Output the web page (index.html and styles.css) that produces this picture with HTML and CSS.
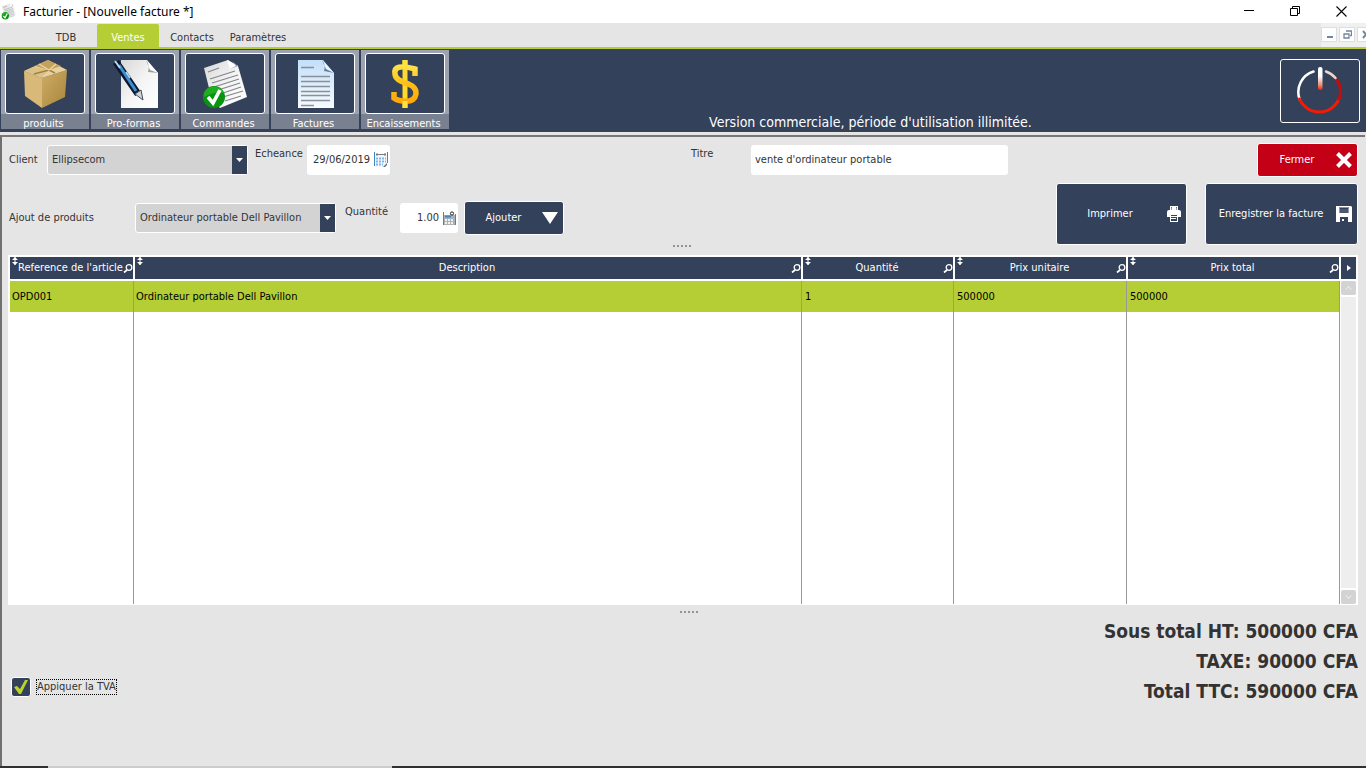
FILE: index.html
```html
<!DOCTYPE html>
<html lang="fr">
<head>
<meta charset="utf-8">
<title>Facturier - [Nouvelle facture *]</title>
<link rel="stylesheet" href="styles.css">
</head>
<body>
<svg class="defs" aria-hidden="true">
  <defs>
    <linearGradient id="paper" x1="0" y1="0" x2="1" y2="1"><stop offset="0" stop-color="#d8d8d8"/><stop offset=".5" stop-color="#f4f4f4"/><stop offset="1" stop-color="#ffffff"/></linearGradient>
    <linearGradient id="bluePaper" x1="0" y1="0" x2="0" y2="1"><stop offset="0" stop-color="#c3dffa"/><stop offset="1" stop-color="#f6fcff"/></linearGradient>
    <linearGradient id="gold" x1="0" y1="0" x2="0" y2="1"><stop offset="0" stop-color="#ffe04a"/><stop offset=".5" stop-color="#ffbe14"/><stop offset="1" stop-color="#ffa90a"/></linearGradient>
    <linearGradient id="boxSide" x1="0" y1="0" x2="1" y2="1"><stop offset="0" stop-color="#cfab66"/><stop offset="1" stop-color="#a8863a"/></linearGradient>
    <linearGradient id="stem" x1="0" y1="0" x2="0" y2="1"><stop offset=".4" stop-color="#ffffff"/><stop offset=".8" stop-color="#e08a70"/><stop offset="1" stop-color="#ff1a00"/></linearGradient>
    <symbol id="order" viewBox="0 0 48 50">
      <path d="M3 9 27 1l10 6 9 31-27 11L11 41Z" fill="url(#paper)"/>
      <path d="m26 1 3 9 8-3Z" fill="#fff"/><path d="m29 10 8-3-6-5 4 5Z" fill="#8f929a"/>
      <path d="m7 13 11-4M9 20l25-8M11 24l26-8M13 28l25-8M14 32l25-8M19 35l21-7M22 38l20-6M24 42l16-5" stroke="#85878c" stroke-width="1.3"/>
      <circle cx="13" cy="38" r="11" fill="#079510"/><path d="M3 34a11 11 0 0 1 20 0q-9-2-20 4Z" fill="#20ad20"/>
      <path d="m7 38 5 6 7-13" fill="none" stroke="#fff" stroke-width="3.6"/>
    </symbol>
    <symbol id="sort" viewBox="0 0 6 8"><path d="M3 0v8" stroke="#fff"/><path d="M0 3h6L3 0ZM0 5h6L3 8Z" fill="#fff"/></symbol>
    <symbol id="search" viewBox="0 0 10 9"><circle cx="6" cy="3.5" r="2.8" fill="none" stroke="#fff" stroke-width="1.3"/><path d="M4 6 1 8.5" stroke="#fff" stroke-width="1.8"/></symbol>
  </defs>
</svg>

<header class="titlebar">
  <svg class="app-icon"><use href="#order"/></svg>
  <h1 class="title">Facturier - [Nouvelle facture *]</h1>
  <div class="window-controls">
    <button class="window-btn" aria-label="Réduire"><svg width="11" height="11" viewBox="0 0 11 11"><path d="M0 4.5h10" stroke="#000"/></svg></button>
    <button class="window-btn" aria-label="Restaurer"><svg width="11" height="11" viewBox="0 0 11 11"><path d="M.5 2.5h7v7h-7ZM2.500 2V.5h7v7H8" fill="none" stroke="#000"/></svg></button>
    <button class="window-btn" aria-label="Quitter"><svg width="11" height="11" viewBox="0 0 11 11"><path d="m.5.500 10 10M10.500.500l-10 10" stroke="#000" stroke-width="1.1"/></svg></button>
  </div>
</header>

<nav class="menubar">
  <a class="tab tab-first" href="#tdb">TDB</a>
  <a class="tab active" href="#ventes" aria-current="page">Ventes</a>
  <a class="tab" href="#contacts">Contacts</a>
  <a class="tab tab-last" href="#parametres">Paramètres</a>
  <div class="child-controls">
    <button class="child-btn" aria-label="Réduire la fenêtre"><svg width="9" height="9" viewBox="0 0 9 9"><path d="M2 7h6" stroke="#7485a0" stroke-width="2"/></svg></button>
    <button class="child-btn" aria-label="Restaurer la fenêtre"><svg width="9" height="9" viewBox="0 0 9 9"><path d="M3 1h5.500v4.500H7M1 4h5v4H1Z" fill="none" stroke="#7485a0" stroke-width="1.300"/></svg></button>
    <button class="child-btn child-close" aria-label="Fermer la fenêtre"><svg width="9" height="9" viewBox="0 0 9 9"><path d="m1 1 6 7M7 1 1 8" stroke="#7485a0" stroke-width="2"/></svg></button>
  </div>
</nav>

<div class="ribbon">
  <div class="tiles">
    <button class="tile"><span class="tile-picture">
      <svg width="48" height="50" viewBox="0 0 48 50"><path d="m3 12 18 7v30L4 37Z" fill="#d9b978"/><path d="m21 19 25-8-2 27-23 11Z" fill="url(#boxSide)"/><path d="M3 12 27 1l19 10-25 8Z" fill="#e8d19c"/><path d="m12 8 16 3-7 7-17-6Z" fill="#dcc084"/><path d="m14 7 14 4 12-4-13-6Z" fill="#c4a25c"/><path d="m13 15 15-4 6 3" fill="none" stroke="#a18145" stroke-width="1.500"/><path d="m18 5 10 6 7-6" fill="none" stroke="#ecd9a8" stroke-width="1.200"/></svg>
    </span><span class="tile-label">produits</span></button>
    <button class="tile"><span class="tile-picture">
      <svg width="48" height="50" viewBox="0 0 48 50"><path d="M10 1h26l11 13v35H10Z" fill="url(#paper)"/><path d="M35 1q4 5 2 12l10 1Z" fill="#fff"/><path d="M35 1q4 5 2 12l10 1L39 11Z" fill="#9a9ca3"/><path d="m5 3 22 32" stroke="#0c1830" stroke-width="7"/><path d="m8 6 17 26" stroke="#3f8fd0" stroke-width="3"/><path d="m4 2 5 7" stroke="#b9d8ee" stroke-width="2"/><path d="m24 35 6-4 2 10Z" fill="#cfd2d8" stroke="#444c5c"/><path d="m15 13 4 6" stroke="#aee0ff" stroke-width="1.500"/></svg>
    </span><span class="tile-label">Pro-formas</span></button>
    <button class="tile"><span class="tile-picture"><svg width="48" height="50"><use href="#order"/></svg></span><span class="tile-label">Commandes</span></button>
    <button class="tile"><span class="tile-picture">
      <svg width="48" height="50" viewBox="0 0 48 50"><path d="M7 1h25l11 13v35H7Z" fill="url(#bluePaper)"/><path d="M31 1q4 5 2 11l10 2Z" fill="#e7f5ff"/><path d="M31 1q4 5 2 11l10 2-8-4Z" fill="#65809e"/><path d="M10 8.500h13M10 17.500h29M10 22.500h29M10 27.500h29M10 32.500h29M10 36.500h29M10 41.500h29M10 46.500h13" stroke="#8b9097" stroke-width="1.300"/></svg>
    </span><span class="tile-label">Factures</span></button>
    <button class="tile"><span class="tile-picture">
      <svg width="48" height="50" viewBox="0 0 48 50"><path d="M24 1v48" stroke="#ffd92e" stroke-width="5"/><path d="M34 17V10Q12 4 14 15c1 11 22 7 21 20-2 11-18 7-22 4v-6" fill="none" stroke="url(#gold)" stroke-width="5.500"/><path d="M24 1v7M24 42v7" stroke="#ffe23d" stroke-width="5"/></svg>
    </span><span class="tile-label">Encaissements</span></button>
  </div>
  <p class="license">Version commerciale, période d'utilisation illimitée.</p>
  <button class="power" aria-label="Arrêter"><svg width="46" height="50" viewBox="0 0 46 50" fill="none" stroke-linecap="round"><path d="M16.500 5.500A21.500 21.500 0 0 0 2.500 33" stroke="#fff" stroke-width="2.500"/><path d="M2.500 33A21.500 21.500 0 0 0 42 33" stroke="#f21b06" stroke-width="3"/><path d="M42 33A21.500 21.500 0 0 0 38.500 12" stroke="#c60b0b" stroke-width="3"/><path d="M38.500 12A21.500 21.500 0 0 0 29 5.500" stroke="#ead8c8" stroke-width="2.500"/><rect x="21" y="1" width="4.500" height="23" rx="2" fill="url(#stem)"/></svg></button>
</div>

<main class="sheet">
  <form class="form">
    <div class="fields">
      <div class="field-row">
        <div class="group group-client">
          <label for="client">Client</label>
          <span class="combo"><select id="client"><option>Ellipsecom</option></select><svg class="combo-arrow" viewBox="0 0 15 28"><path d="M4 12h7l-3.500 4Z" fill="#fff"/></svg></span>
        </div>
        <div class="group group-due">
          <label class="label-top" for="due">Echeance</label>
          <span class="box box-date"><input id="due" type="text" value="29/06/2019"><svg width="14" height="16" viewBox="0 0 14 16"><path d="M1 3h12v9l-3 3H1Z" fill="#f3f8fd"/><path d="M.5 0v14M13.500 0v11" stroke="#3f87bd"/><path d="M2 2.500h10M3 1v3M11 1v3" stroke="#777d83"/><path d="M2 6.500h10M2 9.500h10M2 12.500h7" stroke="#82b4ec" stroke-width="2" stroke-dasharray="2 1"/><path d="m9 15 4-4v2l-2 2Z" fill="#666f78"/></svg></span>
        </div>
        <div class="group group-title">
          <label class="label-top" for="subject">Titre</label>
          <span class="box box-title"><input id="subject" type="text" value="vente d'ordinateur portable"></span>
        </div>
      </div>
      <div class="field-row">
        <div class="group group-product">
          <label for="product">Ajout de produits</label>
          <span class="combo"><select id="product"><option>Ordinateur portable Dell Pavillon</option></select><svg class="combo-arrow" viewBox="0 0 15 28"><path d="M4 12h7l-3.500 4Z" fill="#fff"/></svg></span>
        </div>
        <div class="group group-qty">
          <label class="label-top" for="qty">Quantité</label>
          <span class="box box-qty"><input id="qty" type="text" value="1.00"><svg width="13" height="15" viewBox="0 0 13 15"><path d="M1 4h11v10H1Z" fill="#a9b1b9"/><path d="M.5 1v13M12.500 3v11" stroke="#3f87bd"/><path d="M2 5.500h6" stroke="#4686bd" stroke-width="2"/><path d="M2 9h9M2 12h9" stroke="#eef2f5" stroke-width="2" stroke-dasharray="2 1"/><circle cx="9" cy="2.500" r="1.600" fill="#fff" stroke="#222"/></svg></span>
        </div>
        <button class="btn btn-add" type="button"><span>Ajouter</span><svg width="16" height="12" viewBox="0 0 16 12"><path d="M0 0h16L8 12Z" fill="#fff"/></svg></button>
      </div>
    </div>
    <div class="actions">
      <button class="btn btn-close" type="button"><span>Fermer</span><svg width="16" height="16" viewBox="0 0 16 16"><path d="m1.500 1.500 13 13M14.500 1.500l-13 13" stroke="#fff" stroke-width="4"/></svg></button>
      <div class="action-row">
        <button class="btn btn-large btn-print" type="button"><span>Imprimer</span><svg width="14" height="16" viewBox="0 0 14 16"><path d="M3 0h8v4h1a2 2 0 0 1 2 2v5h-3v5H3v-5H0V6a2 2 0 0 1 2-2h1Z" fill="#fff"/><path d="M4 1h6v3H4ZM4 9h6v6H4Z" fill="#33415b"/><path d="M5 1.500h4V4H5ZM4 10.500h6M4 12.500h5" fill="#fff" stroke="#fff"/></svg></button>
        <button class="btn btn-large btn-save" type="button"><span>Enregistrer la facture</span><svg width="16" height="16" viewBox="0 0 16 16"><path d="M0 0h15l1 1v15h-4v-5H4v5H0Z" fill="#fff"/><path d="M3 1.500h10M3.500 1v6M12.500 1v6" stroke="#8c95a3" fill="none"/><path d="M4 2h8v5H4Z" fill="#33415b"/><path d="M4 3h8v4H4Z" fill="#4b5870"/><path d="M6 13h2v2H6Z" fill="#fff"/></svg></button>
      </div>
    </div>
  </form>

  <svg class="splitter" width="20" height="2"><path d="M0 1h20" stroke="#444" stroke-dasharray="2 2"/></svg>

  <section class="grid" aria-label="Lignes de la facture">
    <table class="lines">
      <colgroup><col class="col-ref"><col><col class="col-qty"><col class="col-unit"><col class="col-total"></colgroup>
      <thead>
        <tr>
          <th scope="col"><div class="head"><svg class="sort"><use href="#sort"/></svg><span>Reference de l'article</span><svg class="search"><use href="#search"/></svg></div></th>
          <th scope="col"><div class="head"><svg class="sort"><use href="#sort"/></svg><span>Description</span><svg class="search"><use href="#search"/></svg></div></th>
          <th scope="col"><div class="head"><svg class="sort"><use href="#sort"/></svg><span>Quantité</span><svg class="search"><use href="#search"/></svg></div></th>
          <th scope="col"><div class="head"><svg class="sort"><use href="#sort"/></svg><span>Prix unitaire</span><svg class="search"><use href="#search"/></svg></div></th>
          <th scope="col"><div class="head"><svg class="sort"><use href="#sort"/></svg><span>Prix total</span><svg class="search"><use href="#search"/></svg></div></th>
        </tr>
      </thead>
      <tbody>
        <tr class="selected"><td>OPD001</td><td>Ordinateur portable Dell Pavillon</td><td>1</td><td>500000</td><td>500000</td></tr>
        <tr class="filler"><td></td><td></td><td></td><td></td><td></td></tr>
      </tbody>
    </table>
    <div class="side">
      <button class="side-more" aria-label="Colonnes"><svg width="4" height="6" viewBox="0 0 4 6"><path d="m0 0 4 3-4 3Z" fill="#fff"/></svg></button>
      <button class="side-scroll" aria-label="Monter"><svg width="7" height="4" viewBox="0 0 7 4"><path d="m1 3.500 2.500-3 2.500 3" fill="none" stroke="#f4f4f4"/></svg></button>
      <div class="track"></div>
      <button class="side-scroll" aria-label="Descendre"><svg width="7" height="4" viewBox="0 0 7 4"><path d="m1 .5 2.500 3 2.500-3" fill="none" stroke="#f4f4f4"/></svg></button>
    </div>
  </section>

  <footer class="summary">
    <svg class="splitter splitter-low" width="20" height="2"><path d="M0 1h20" stroke="#444" stroke-dasharray="2 2"/></svg>
    <div class="summary-body">
      <label class="tax"><input class="tax-box" type="checkbox" checked><span class="tax-label">Appiquer la TVA</span></label>
      <div class="totals">
        <p>Sous total HT: 500000 CFA</p>
        <p>TAXE: 90000 CFA</p>
        <p>Total TTC: 590000 CFA</p>
      </div>
    </div>
  </footer>
</main>
<div class="edge"><div class="edge-light"></div></div>
</body>
</html>
```
FILE: styles.css
```css
* { box-sizing: border-box; }

body {
  margin: 0;
  min-height: 100vh;
  display: flex;
  flex-direction: column;
  overflow-x: hidden;
  background: #e5e5e5;
  color: #333;
  font: 11px/14px "DejaVu Sans Condensed", "DejaVu Sans", sans-serif;
}

button, input, select { font: inherit; color: inherit; margin: 0; }
button { padding: 0; border: 0; background: none; }
p, h1 { margin: 0; }
svg { display: block; flex: none; }
.defs { position: absolute; width: 0; height: 0; }

.titlebar {
  display: flex;
  align-items: center;
  height: 23px;
  background: #fff;
  color: #000;
}
.app-icon { width: 16px; height: 17px; margin: 0 6px 0 1px; }
.title { flex: 1; font: 12px/22px "Noto Sans", "Open Sans", sans-serif; }
.window-controls { display: flex; }
.window-btn {
  width: 46px;
  height: 22px;
  display: flex;
  align-items: center;
  justify-content: center;
}
.window-btn:last-child { margin-right: 2px; }

.menubar {
  display: flex;
  align-items: stretch;
  height: 26px;
  border-bottom: 2px solid #b5ce35;
}
.tab {
  display: flex;
  align-items: center;
  justify-content: center;
  min-width: 62px;
  margin-top: 1px;
  padding-top: 4px;
  color: #333;
  text-decoration: none;
}
.tab-first { margin-left: 35px; }
.tab.active { border-radius: 2px 2px 0 0; background: #b5ce35; color: #fff; }
.tab + .tab:not(.active) { min-width: 66px; }
.child-controls {
  display: flex;
  align-items: center;
  gap: 2px;
  width: 45px;
  margin-left: auto;
  padding-bottom: 2px;
  overflow: hidden;
  background: #f0f0f0;
}
.child-btn {
  display: flex;
  flex: none;
  align-items: center;
  justify-content: center;
  width: 16px;
  height: 15px;
  border: 1px solid #dedede;
  background: #fff;
}
.child-close { justify-content: flex-start; padding-left: 4px; }

.ribbon {
  display: flex;
  height: 83px;
  background: #33415b;
}
.tiles { display: flex; gap: 2px; padding: 1px 0 3px 1px; }
.tile {
  display: flex;
  flex-direction: column;
  width: 88px;
  padding-top: 3px;
  background: #9ca2b0;
  color: #fff;
}
.tile-picture {
  display: flex;
  flex: none;
  align-items: center;
  justify-content: center;
  height: 61px;
  margin: 0 4px;
  border: 1px solid #fff;
  border-radius: 3px;
  background: #33415b;
}
.tile-label {
  width: 100%;
  height: 15px;
  padding-right: 3px;
  line-height: 20px;
  background: #798090;
}
.license {
  flex: 1;
  align-self: flex-end;
  padding-left: 12px;
  color: #fff;
  text-align: center;
  font-size: 14px;
  line-height: 20px;
}
.power {
  display: flex;
  align-items: center;
  justify-content: center;
  width: 80px;
  height: 64px;
  margin: 10px 6px 0 0;
  border: 1px solid #fff;
  border-radius: 3px;
}

.sheet {
  display: flex;
  flex: 1;
  flex-direction: column;
  margin: 3px 1px 0 0;
  padding: 6px 7px 0 6px;
  border: solid #707070;
  border-width: 2px 0 0 2px;
  border-top-color: #777;
}
.form { display: flex; justify-content: space-between; }
.fields { display: flex; flex: 1; flex-direction: column; gap: 24px; }
.field-row { display: flex; height: 34px; }
.group { display: flex; align-items: center; }
.label-top { align-self: flex-start; line-height: 22px; }
.group-client label { width: 39px; padding-left: 1px; }
.group-due { margin-left: 7px; }
.group-due label { width: 52px; }
.group-title { margin-left: 301px; }
.group-title label { width: 60px; }
.group-product label { width: 127px; padding-left: 1px; }
.group-qty { margin-left: 9px; }
.group-qty label { width: 55px; }

.combo { position: relative; display: block; width: 201px; height: 30px; }
.combo select {
  width: 100%;
  height: 100%;
  padding: 0 18px 0 4px;
  border: 1px solid #fff;
  border-radius: 3px;
  background: #d3d3d3;
  appearance: none;
}
.combo-arrow {
  position: absolute;
  top: 1px;
  right: 1px;
  width: 15px;
  height: 28px;
  background: #33415b;
  pointer-events: none;
}
.box {
  display: flex;
  align-items: center;
  height: 30px;
  border-radius: 3px;
  background: #fff;
}
.box input { flex: 1; min-width: 0; padding: 0; border: 0; background: none; outline: 0; }
.box-date { width: 83px; padding: 0 2px 0 6px; }
.box-title { width: 257px; padding: 0 4px; }
.box-qty { width: 58px; padding: 0 2px 0 8px; }
.box-qty input { padding-right: 4px; text-align: right; }

.btn {
  display: flex;
  align-items: center;
  height: 34px;
  padding-right: 5px;
  border: 1px solid #fff;
  border-radius: 3px;
  background: #33415b;
  color: #fff;
}
.btn span { flex: 1; text-align: center; white-space: nowrap; }
.btn-add { width: 100px; margin-left: 6px; }
.actions { display: flex; flex-direction: column; align-items: flex-end; gap: 6px; }
.action-row { display: flex; gap: 18px; }
.btn-close { width: 101px; background: #c30016; }
.btn-large { height: 62px; }
.btn-print { width: 131px; }
.btn-save { width: 153px; }
.btn-print span { padding-right: 4px; }

.splitter { align-self: center; }

.grid {
  display: flex;
  flex: 1;
  margin-top: 8px;
  padding: 2px 2px 1px;
  background: #fff;
}
.lines {
  flex: 1;
  table-layout: fixed;
  border-spacing: 0;
  color: #000;
}
.col-ref { width: 124px; }
.col-qty { width: 152px; }
.col-unit { width: 173px; }
.col-total { width: 213px; }
.lines th {
  height: 24px;
  padding: 0;
  border: solid #fff;
  border-width: 0 1px 2px;
  background: #33415b;
  color: #fff;
  font-weight: normal;
}
.lines th:first-child { border-left: 0; }
.head { display: flex; align-items: center; height: 22px; }
.head span { flex: 1; white-space: nowrap; text-align: center; }
.sort { align-self: flex-start; width: 6px; height: 8px; margin-left: 2px; }
.search { width: 10px; height: 9px; }
.lines td { padding: 0 2px; border-right: 1px solid #999; }
.lines td:nth-child(n+3) { padding-left: 3px; }
.selected td { height: 31px; background: #b5ce35; }
.lines .filler td { height: auto; }
.side { display: flex; flex-direction: column; width: 16px; padding-left: 1px; gap: 2px; }
.side-more, .side-scroll { display: flex; align-items: center; justify-content: center; }
.side-more { height: 22px; background: #33415b; }
.side-scroll { height: 14px; border-radius: 2px; background: #d3d3d3; }
.track { flex: 1; background: #eee; }

.summary { display: flex; flex-direction: column; height: 161px; padding-top: 6px; }
.splitter-low { margin-left: 14px; }
.summary-body { display: flex; justify-content: space-between; padding-top: 3px; }
.tax { display: flex; align-items: center; gap: 5px; align-self: flex-end; height: 38px; padding-left: 3px; }
.tax-box {
  width: 20px;
  height: 20px;
  margin: 0;
  border: 1px solid #fff;
  border-radius: 3px;
  background: #33415b url("data:image/svg+xml,%3Csvg xmlns='http://www.w3.org/2000/svg' viewBox='0 0 18 18'%3E%3Cpath d='m2 9 3-1 3 3 5-9h3L9 16H7Z' fill='%23b9d22e'/%3E%3C/svg%3E") center / 18px no-repeat;
  appearance: none;
}
.tax-label { border: 1px dotted #000; }
.totals {
  color: #333;
  text-align: right;
  font-size: 19px;
  font-weight: bold;
  line-height: 30px;
}

.edge { height: 2px; background: #303030; }
.edge-light { width: 344px; height: 2px; margin-left: 48px; background: #ccc; }
```
